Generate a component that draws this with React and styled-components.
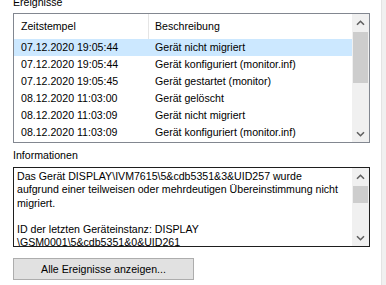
import React from "react";
import styled, { createGlobalStyle } from "styled-components";

const GlobalStyle = createGlobalStyle`
  html, body { margin: 0; padding: 0; background: #ffffff; overflow: hidden; }
  body { font-family: "Liberation Sans", Arial, sans-serif; font-size: 10.6px; color: #000; }
`;

const Page = styled.div`
  display: flex;
  width: 386px;
  height: 285px;
  overflow: hidden;
`;

const Main = styled.div`
  width: 381px;
  box-sizing: border-box;
  padding: 0 11px 0 13px;
  display: flex;
  flex-direction: column;
`;

const EdgeStrip = styled.div`
  flex: 1;
  border-left: 1px solid #e3e3e3;
  background: #f0f0f0;
`;

const GroupLabel = styled.div`
  line-height: 13px;
  margin-top: ${(p) => p.$top}px;
  white-space: nowrap;
`;

const ListBox = styled.div`
  margin-top: 4px;
  height: 130px;
  box-sizing: border-box;
  border: 1px solid #828790;
  display: flex;
  overflow: hidden;
`;

const ListContent = styled.div`
  flex: 1;
  overflow: hidden;
`;

const HeaderRow = styled.div`
  display: grid;
  grid-template-columns: 135px 1fr;
  height: 25px;
  line-height: 25px;
`;

const HeaderCell = styled.div`
  padding-left: ${(p) => p.$pad}px;
  border-right: ${(p) => (p.$divider ? "1px solid #e5e5e5" : "none")};
  white-space: nowrap;
  overflow: hidden;
`;

const Row = styled.div`
  display: grid;
  grid-template-columns: 135px 1fr;
  height: 17px;
  line-height: 17px;
  background: ${(p) => (p.$selected ? "#cce8ff" : "transparent")};
`;

const Cell = styled.div`
  padding-left: ${(p) => p.$pad}px;
  white-space: nowrap;
  overflow: hidden;
`;

const ScrollTrack = styled.div`
  width: 17px;
  flex: none;
  background: #f0f0f0;
  display: flex;
  flex-direction: column;
`;

const ArrowBox = styled.div`
  height: 17px;
  flex: none;
  display: flex;
  align-items: center;
  justify-content: center;
`;

const ThumbArea = styled.div`
  flex: 1;
  padding-top: ${(p) => p.$offset}px;
`;

const Thumb = styled.div`
  margin: 0 1px;
  height: ${(p) => p.$h}px;
  background: #cdcdcd;
`;

const InfoBox = styled.div`
  margin-top: 5px;
  height: 80px;
  box-sizing: border-box;
  border: 1px solid #1e1e1e;
  display: flex;
  overflow: hidden;
`;

const InfoText = styled.div`
  flex: 1;
  padding: 2px 3px 0 3px;
  overflow: hidden;
`;

const InfoLine = styled.div`
  height: 13.3px;
  line-height: 13.3px;
  white-space: nowrap;
`;

const Button = styled.button`
  margin-top: 11px;
  width: 181px;
  height: 22px;
  box-sizing: border-box;
  border: 1px solid #adadad;
  background: #e1e1e1;
  font-family: "Liberation Sans", Arial, sans-serif;
  font-size: 10.6px;
  color: #000;
  padding: 0;
  line-height: 20px;
  text-align: center;
`;

const Chevron = ({ down }) => (
  <svg width="9" height="6" viewBox="0 0 9 6">
    <path
      d={down ? "M1 1.2 L4.5 4.7 L8 1.2" : "M1 4.8 L4.5 1.3 L8 4.8"}
      fill="none"
      stroke="#606060"
      strokeWidth="1.6"
    />
  </svg>
);

const Scrollbar = ({ offset, thumb }) => (
  <ScrollTrack>
    <ArrowBox>
      <Chevron />
    </ArrowBox>
    <ThumbArea $offset={offset}>
      <Thumb $h={thumb} />
    </ThumbArea>
    <ArrowBox>
      <Chevron down />
    </ArrowBox>
  </ScrollTrack>
);

const events = [
  ["07.12.2020 19:05:44", "Gerät nicht migriert", true],
  ["07.12.2020 19:05:44", "Gerät konfiguriert (monitor.inf)"],
  ["07.12.2020 19:05:45", "Gerät gestartet (monitor)"],
  ["08.12.2020 11:03:00", "Gerät gelöscht"],
  ["08.12.2020 11:03:09", "Gerät nicht migriert"],
  ["08.12.2020 11:03:09", "Gerät konfiguriert (monitor.inf)"],
];

const infoLines = [
  "Das Gerät DISPLAY\\IVM7615\\5&cdb5351&3&UID257 wurde",
  "aufgrund einer teilweisen oder mehrdeutigen Übereinstimmung nicht",
  "migriert.",
  "\u00a0",
  "ID der letzten Geräteinstanz: DISPLAY",
  "\\GSM0001\\5&cdb5351&0&UID261",
];

export default function App() {
  return (
    <>
      <GlobalStyle />
      <Page>
        <Main>
          <GroupLabel $top={-4}>Ereignisse</GroupLabel>
          <ListBox>
            <ListContent>
              <HeaderRow>
                <HeaderCell $pad={7} $divider>
                  Zeitstempel
                </HeaderCell>
                <HeaderCell $pad={6}>Beschreibung</HeaderCell>
              </HeaderRow>
              {events.map(([t, d, sel], i) => (
                <Row key={i} $selected={!!sel}>
                  <Cell $pad={7}>{t}</Cell>
                  <Cell $pad={6}>{d}</Cell>
                </Row>
              ))}
            </ListContent>
            <Scrollbar offset={1} thumb={51} />
          </ListBox>
          <GroupLabel $top={6}>Informationen</GroupLabel>
          <InfoBox>
            <InfoText>
              {infoLines.map((l, i) => (
                <InfoLine key={i}>{l}</InfoLine>
              ))}
            </InfoText>
            <Scrollbar offset={1} thumb={17} />
          </InfoBox>
          <Button>Alle Ereignisse anzeigen...</Button>
        </Main>
        <EdgeStrip />
      </Page>
    </>
  );
}
